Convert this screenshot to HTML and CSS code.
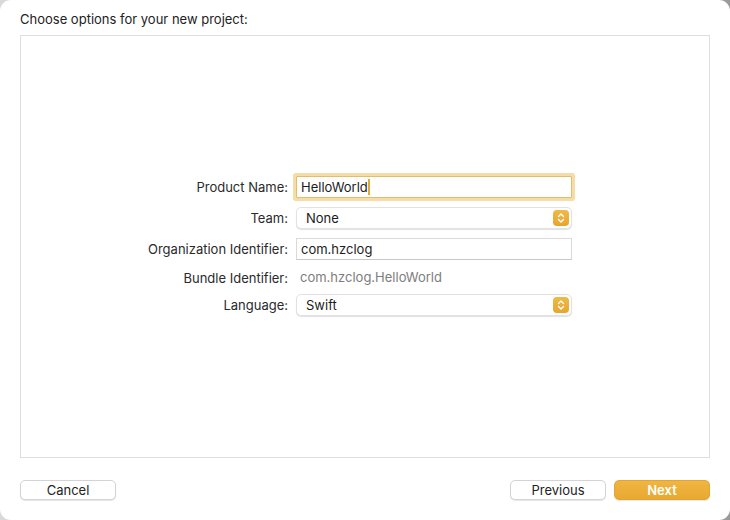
FILE: index.html
```html
<!DOCTYPE html>
<html>
<head>
<meta charset="utf-8">
<link rel="stylesheet" href="styles.css">
</head>
<body>
<div class="window">
  <div class="title">Choose options for your new project:</div>
  <div class="panel">
    <div class="form">
      <label class="lbl">Product Name:</label>
      <div class="field focus"><span class="val">HelloWorld</span><span class="caret"></span></div>

      <label class="lbl">Team:</label>
      <div class="popup"><span class="val">None</span><span class="stepper"><svg width="16" height="16" viewBox="0 0 16 16"><path d="M5.5 6.5 L8 4 L10.5 6.5 M5.5 9.5 L8 12 L10.5 9.5" fill="none" stroke="#fff" stroke-width="1.4" stroke-linecap="round" stroke-linejoin="round"/></svg></span></div>

      <label class="lbl">Organization Identifier:</label>
      <div class="field"><span class="val">com.hzclog</span></div>

      <label class="lbl">Bundle Identifier:</label>
      <div class="static">com.hzclog.HelloWorld</div>

      <label class="lbl">Language:</label>
      <div class="popup"><span class="val">Swift</span><span class="stepper"><svg width="16" height="16" viewBox="0 0 16 16"><path d="M5.5 6.5 L8 4 L10.5 6.5 M5.5 9.5 L8 12 L10.5 9.5" fill="none" stroke="#fff" stroke-width="1.4" stroke-linecap="round" stroke-linejoin="round"/></svg></span></div>
    </div>
  </div>
  <div class="footer">
    <button class="btn">Cancel</button>
    <div class="right">
      <button class="btn">Previous</button>
      <button class="btn primary">Next</button>
    </div>
  </div>
</div>
</body>
</html>
```
FILE: styles.css
```css
html, body {
  margin: 0;
  padding: 0;
  width: 730px;
  height: 520px;
  overflow: hidden;
}
body {
  background: linear-gradient(to right, #d9d9d9, #9a9a9a);
  font-family: Inter, "Liberation Sans", Arial, sans-serif;
  font-size: 13px;
  color: #262626;
}
.window {
  width: 730px;
  height: 520px;
  box-sizing: border-box;
  background: #ffffff;
  border-radius: 11px;
  padding-top: 11px;
  display: flex;
  flex-direction: column;
}
.title {
  margin-left: 20px;
  line-height: 16px;
  height: 16px;
  color: #222;
}
.panel {
  margin: 8px 20px 0 20px;
  height: 423px;
  box-sizing: border-box;
  border: 1px solid #dedede;
  background: #fff;
  display: flex;
  align-items: center;
  justify-content: center;
  padding-right: 10px;
}
.form {
  display: grid;
  grid-template-columns: 140px 276px;
  grid-template-rows: 31px 32px 30px 27px 28px;
  column-gap: 8px;
  align-items: center;
  margin-top: -3px;
}
.lbl {
  text-align: right;
  color: #2a2a2a;
  white-space: nowrap;
}
.field {
  height: 22px;
  box-sizing: border-box;
  border: 1px solid #dadada;
  border-bottom-color: #c8c8c8;
  background: #fff;
  display: flex;
  align-items: center;
  padding-left: 4px;
  color: #1c1c1c;
}
.field.focus {
  border-color: #e2bd6f;
  box-shadow: 0 0 0 3px #f6dca6;
  border-radius: 1px;
}
.caret {
  display: inline-block;
  width: 2px;
  height: 16px;
  background: #e8a932;
}
.popup {
  height: 22px;
  box-sizing: border-box;
  border: 1px solid #e2e2e2;
  border-radius: 5px;
  background: #fff;
  box-shadow: 0 1px 1px rgba(0,0,0,0.12);
  display: flex;
  align-items: center;
  justify-content: space-between;
  padding-left: 9px;
  padding-right: 2px;
  color: #1c1c1c;
}
.static {
  color: #7d7d7d;
  padding-left: 4px;
  line-height: 17px;
}
.stepper {
  width: 16px;
  height: 16px;
  border-radius: 4px;
  background: linear-gradient(#f0b947, #e5a62f);
  display: flex;
  align-items: center;
  justify-content: center;
}
.stepper svg {
  display: block;
}
.footer {
  margin: 22px 20px 0 20px;
  display: flex;
  justify-content: space-between;
  align-items: center;
}
.right {
  display: flex;
  gap: 8px;
}
.btn {
  font-family: Inter, "Liberation Sans", Arial, sans-serif;
  font-size: 13px;
  width: 96px;
  height: 20px;
  padding: 0;
  border: 1px solid #d4d4d4;
  border-radius: 5px;
  background: #fff;
  color: #222;
  box-shadow: 0 1px 1px rgba(0,0,0,0.10);
  line-height: 18px;
}
.btn.primary {
  background: linear-gradient(#efb543, #e8a930);
  border-color: #e3a52e;
  color: #fff;
  font-weight: 600;
}
```
